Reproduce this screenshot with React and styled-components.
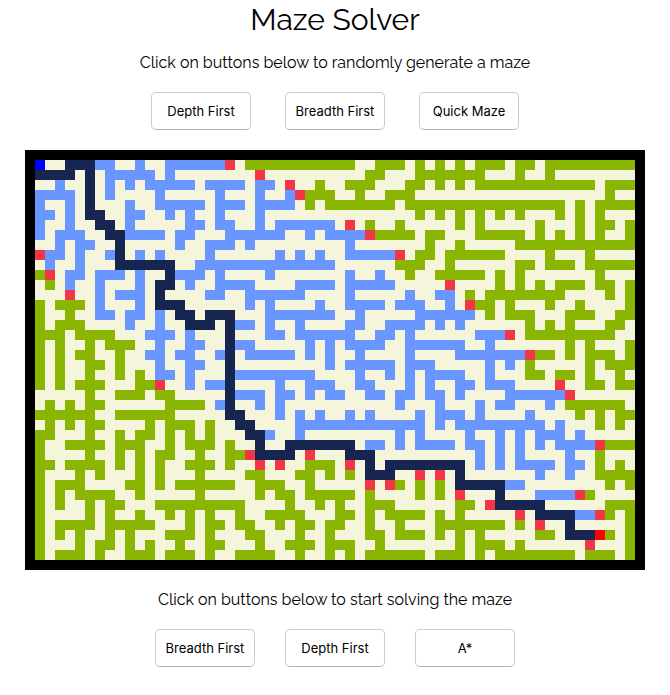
import React from "react";
import styled, { createGlobalStyle } from "styled-components";

const GlobalStyle = createGlobalStyle`
  body {
    margin: 0;
    background: #ffffff;
    color: #000000;
    font-family: Raleway, Lato, sans-serif;
  }
`;

const Page = styled.main`
  display: flex;
  flex-direction: column;
  align-items: center;
  padding: 0 24px 28px;
`;

const Title = styled.h1`
  margin: 0;
  font-size: 30px;
  font-weight: 400;
  line-height: 40px;
`;

const Controls = styled.section`
  display: flex;
  flex-direction: column;
  align-items: center;
  gap: 17px;
  padding: ${(p) => (p.$below ? "18px 0 0" : "11px 0 20px")};
`;

const Hint = styled.p`
  margin: 0;
  font-size: 16px;
  line-height: 24px;
  text-align: center;
`;

const ButtonRow = styled.div`
  display: flex;
  flex-wrap: wrap;
  justify-content: center;
  gap: ${(p) => p.$gap}px;
`;

const Button = styled.button`
  width: 100px;
  height: 38px;
  padding: 0;
  border: 1px solid #cccccc;
  border-bottom-color: #b3b3b3;
  border-radius: 5px;
  background: #ffffff;
  color: #000000;
  font-family: Inter, sans-serif;
  font-size: 13px;
  white-space: nowrap;
  cursor: pointer;

  &:hover {
    background: #f5f5f5;
  }
`;

const Board = styled.svg`
  display: block;
  box-sizing: border-box;
  width: 100%;
  max-width: 620px;
  border: 10px solid #000000;
  background: #f5f5dc;
`;

const COLORS = {
  g: "#8ab503",
  b: "#6996ff",
  n: "#172650",
  r: "#f23645",
  S: "#0000ff",
  E: "#ff0000",
};

/* g: wall, b: visited, n: solution, r: frontier, S: start, E: end */
const MAZE = [
  "S..nnnbb..b..bbbbbbr" + ".ggggggggggg..ggg.g." + "g.g.ggg.gg.ggggggggg",
  "nnnn.n.bbbbb.b......" + "..r..........gg...gg" + "ggggg...g..g........",
  "..b..n.b.b.bbbbb.bbb" + "b.bb.r..g..ggg...gg." + "g.g.gggggggggggg.ggg",
  "bbbb.n.b....b.....b." + "..b..brggg..g..ggg.." + ".................g..",
  "b..b.n...b..bbbbb.bb" + "b.bbbb.g.ggggggg.ggg" + "ggggggggggggg.g.gggg",
  "bb.b.nn..bb..b.b..b." + "..b...............g." + "g.g.g.g.g...g.g.g...",
  "b..b..nn.b.....bb.bb" + "..b.bbbbbb.r.g..g..." + "..g.g.....g...g.gg.g",
  "b.bbb..nnbbbb.bb...b" + "bbbbb..b.bbbbrgggg.g" + "g...ggggg.g.g.g.g..g",
  "..b.bb..n.....b..bbb" + ".b.........b.......g" + "..g.....gggggggggggg",
  "rbb.b..bn.b.b....b.." + "....b.b.b..bbbbbr.gg" + ".gggggg....g...g....",
  ".b..b...nnnnnn..bbbb" + "bbbbbbbbbb......ggg." + ".g......gg.ggg.ggggg",
  "gr.bb.bbb.b..nbbb.b." + "...b.......b..b..g.." + "ggggg.g.g.......g...",
  ".g.b..b...b.nn.b..bb" + "bb....bbbb.bbbbb...." + ".r....g.g.g.ggg.gg.g",
  "...r..b.bbb.n....bb." + ".bbbbbb....b.....b.." + "bb.g.gggggggg....g.g",
  "g.ggg.b...b.nnn....." + ".b.b....b..bbbb.bbb." + ".b.rgg.g...g..g....g",
  "g..g..bb.bb.b.nn.nnn" + "...bbbbbbb..b.....bb" + "bbbb.g.ggg...ggg..gg",
  "g.ggg....b..b..nnn.n" + "bb.b..b....bb..bbbb." + "b.b......g.g.g...gg.",
  "ggg.gggg...bbb.b...n" + "...bb.bbbbbb..bb.b.." + "....bbbr.ggggggggg..",
  "g.g..g.ggg..b..bb..n" + "bb.....b.b.bbbb..bbb" + "bbb..b.......g.g...g",
  "g.g.gg..g..bb.bb..bn" + ".bbbbb.b.b..b....b.." + "..bbbbbbbrgg.g.ggg.g",
  "g.g..gg.g...b..bb..n" + ".........b.bbbbb.bbb" + ".....b.b.g.....g.ggg",
  "g.g..g..g.g.bb.b...n" + "bbbbbbbb....b..b.b.b" + "bbb..b...gg.gg.g..g.",
  "g.g.ggg...ggr..b.bbn" + "....b..bbb..bb...b.b" + "..bb.bbb....r..gg.gg",
  ".....g..ggg.gg.....n" + "bbb.bb.b.bb..bb.bb.b" + "b.b....bbbbbbr......",
  ".g.g.gg......gggg.bn" + "..b.b...........b..." + "b...b.bb...b.gggggg.",
  "gggggg..gggggg.....n" + "n...b.b.b..b.b....b." + "bbb.b....b....g.g.gg",
  ".g.g.gg....g.ggg.g.." + "nn....bbbbbbbbbbbbb." + "b.bbbbbbbbb.b...g.g.",
  "gg...g..g.gg.g.g.g.." + ".nnb..b.........b.b." + "...b..b.b.bbb.b.....",
  "g..gggg.ggg..g.ggg.g" + "..n..nnnnnnn.bb.b.bb" + "bb.bb.b.b.b.bbbbrggg",
  "g....g..g.g.gg..g..g" + "grnnnn.r...nnn......" + "....b.b.b....b..g...",
  "gg.gggg.g.g.g..ggg.g" + "..r.r..ggg.r.n.nnnnn" + "nnn.b.b.bbbb.bb.g.g.",
  "g...g.g...g.g...g..." + ".gg...gg.g.g.nnn..r." + "r.n.......b..b..gggg",
  "g.ggg....gg.g.gggggg" + "..ggg..g.....r.rg.g." + "g.nnnnnbb........g.g",
  "g.g.gggg..g.....g..." + "..g.gg.ggggg.g....g." + "g.r...n...bbbbrg....",
  "g.g..g.gg...gggggggg" + "g....g..g.g..ggg...." + "..gg.rnnnnn......ggg",
  "g....g.g..g..g.g.g.." + "g..gggg...gg.g.gggg." + "g.g.....r.nnnnbbrg.g",
  "g.gggg.ggggg...g.gg." + "gg..g.gg.gg..g..g..." + "ggggggg.g.r..n.....g",
  "g.g.g..g.g...ggg.g.." + ".gg...g..g...gg.ggg." + "g.g.g.....gg.nnnEg.g",
  "g...g.gg.g.g..g..gg." + "..g..ggg.ggg..g....." + "..g.ggg.g......r...g",
  "g.ggg.g..ggg.ggg.g.." + "gggg..g..g.g.gggggg." + "ggg.g.gggggggg.ggg.g",
];

/* One path per colour, with neighbouring cells of a row joined into runs. */
function pathFor(code) {
  const runs = new RegExp(`${code}+`, "g");
  return MAZE.map((row, y) =>
    [...row.matchAll(runs)]
      .map((m) => `M${m.index} ${y}h${m[0].length}v1h-${m[0].length}z`)
      .join("")
  ).join("");
}

function Maze() {
  return (
    <Board
      viewBox={`0 0 ${MAZE[0].length} ${MAZE.length}`}
      shapeRendering="crispEdges"
      role="img"
      aria-label="Maze"
    >
      {Object.entries(COLORS).map(([code, color]) => (
        <path key={code} d={pathFor(code)} fill={color} />
      ))}
    </Board>
  );
}

function ControlGroup({ hint, labels, gap, below }) {
  return (
    <Controls $below={below}>
      <Hint>{hint}</Hint>
      <ButtonRow $gap={gap}>
        {labels.map((label) => (
          <Button type="button" key={label}>
            {label}
          </Button>
        ))}
      </ButtonRow>
    </Controls>
  );
}

export default function App() {
  return (
    <>
      <GlobalStyle />
      <Page>
        <Title>Maze Solver</Title>
        <ControlGroup
          hint="Click on buttons below to randomly generate a maze"
          labels={["Depth First", "Breadth First", "Quick Maze"]}
          gap={34}
        />
        <Maze />
        <ControlGroup
          below
          hint="Click on buttons below to start solving the maze"
          labels={["Breadth First", "Depth First", "A*"]}
          gap={30}
        />
      </Page>
    </>
  );
}
